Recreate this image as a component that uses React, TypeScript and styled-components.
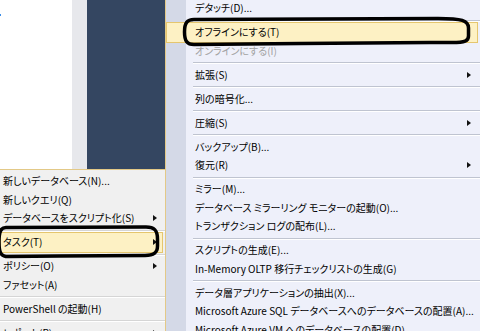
import styled, { createGlobalStyle } from 'styled-components';

type Entry =
  | { kind: 'item'; label: string; arrow?: boolean; disabled?: boolean; active?: boolean }
  | { kind: 'sep' };

const taskMenu: Entry[] = [
  { kind: 'item', label: 'デタッチ(D)...' },
  { kind: 'sep' },
  { kind: 'item', label: 'オフラインにする(T)', active: true },
  { kind: 'item', label: 'オンラインにする(I)', disabled: true },
  { kind: 'sep' },
  { kind: 'item', label: '拡張(S)', arrow: true },
  { kind: 'sep' },
  { kind: 'item', label: '列の暗号化...' },
  { kind: 'sep' },
  { kind: 'item', label: '圧縮(S)', arrow: true },
  { kind: 'sep' },
  { kind: 'item', label: 'バックアップ(B)...' },
  { kind: 'item', label: '復元(R)', arrow: true },
  { kind: 'sep' },
  { kind: 'item', label: 'ミラー(M)...' },
  { kind: 'item', label: 'データベース ミラーリング モニターの起動(O)...' },
  { kind: 'item', label: 'トランザクション ログの配布(L)...' },
  { kind: 'sep' },
  { kind: 'item', label: 'スクリプトの生成(E)...' },
  { kind: 'item', label: 'In-Memory OLTP 移行チェックリストの生成(G)' },
  { kind: 'sep' },
  { kind: 'item', label: 'データ層アプリケーションの抽出(X)...' },
  { kind: 'item', label: 'Microsoft Azure SQL データベースへのデータベースの配置(A)...' },
  { kind: 'item', label: 'Microsoft Azure VM へのデータベースの配置(D)...' },
];

const dbMenu: Entry[] = [
  { kind: 'item', label: '新しいデータベース(N)...' },
  { kind: 'item', label: '新しいクエリ(Q)' },
  { kind: 'item', label: 'データベースをスクリプト化(S)', arrow: true },
  { kind: 'sep' },
  { kind: 'item', label: 'タスク(T)', arrow: true, active: true },
  { kind: 'sep' },
  { kind: 'item', label: 'ポリシー(O)', arrow: true },
  { kind: 'item', label: 'ファセット(A)' },
  { kind: 'sep' },
  { kind: 'item', label: 'PowerShell の起動(H)' },
  { kind: 'sep' },
  { kind: 'item', label: 'レポート(P)', arrow: true },
];

const GlobalStyle = createGlobalStyle`
  html, body {
    margin: 0;
    padding: 0;
    width: 480px;
    height: 331px;
    overflow: hidden;
    background: #fff;
  }
  body {
    font-family: "Noto Sans CJK JP", "Noto Sans", sans-serif;
    font-feature-settings: "palt";
  }
`;

const Screen = styled.div`
  display: grid;
  grid-template-columns: 165px 315px;
  width: 480px;
  height: 331px;
  overflow: hidden;
`;

const LeftColumn = styled.div`
  display: flex;
  flex-direction: column;
  min-width: 0;
`;

const Backdrop = styled.div`
  display: flex;
  height: 169px;
  flex-shrink: 0;
`;

const Pane = styled.div<{ $tone: 'white' | 'gray' | 'navy'; $w?: number }>`
  width: ${p => (p.$w ? `${p.$w}px` : 'auto')};
  flex: ${p => (p.$w ? 'none' : '1')};
  background: ${p => (p.$tone === 'white' ? '#ffffff' : p.$tone === 'gray' ? '#e7e8ec' : '#344661')};
  position: relative;
`;

const Caret = styled.div`
  position: absolute;
  left: 0;
  top: 14px;
  width: 1px;
  height: 2px;
  background: #3c8ee8;
`;

const DbMenu = styled.div`
  flex: 1;
  border-top: 1px solid #e3c987;
  background: #f0f0f0;
  padding-top: 1.75px;
`;

const TaskMenu = styled.div`
  height: 100%;
  box-sizing: border-box;
  border-left: 1px solid #e3c987;
  background: linear-gradient(to right, #d4d9e7 0 20px, #eef0fa 20px);
`;

const TaskList = styled.div`
  margin-top: -1.25px;
`;

const Row = styled.div<{ $active?: boolean; $disabled?: boolean; $pad: number; $arrowPad: number }>`
  position: relative;
  display: flex;
  align-items: center;
  height: 18.5px;
  box-sizing: border-box;
  padding-left: ${p => p.$pad}px;
  padding-right: ${p => p.$arrowPad}px;
  margin-right: 2px;
  font-size: 10px;
  line-height: 1;
  white-space: nowrap;
  color: ${p => (p.$disabled ? '#a2a2a2' : '#000')};
  ${p =>
    p.$active &&
    `
    background: #fdf1c4;
    box-shadow: inset 0 0 0 1px #e5c66e;
    height: 21px;
    margin-top: -1.25px;
    margin-bottom: -1.25px;
  `}
`;

const Label = styled.span`
  flex: 1;
  min-width: 0;
`;

const Arrow = styled.span`
  flex: none;
  width: 0;
  height: 0;
  border-top: 3.5px solid transparent;
  border-bottom: 3.5px solid transparent;
  border-left: 4px solid #111;
`;

const Separator = styled.div<{ $inset: number; $line: string }>`
  height: 5.5px;
  display: flex;
  align-items: center;
  padding-left: ${p => p.$inset}px;
  &::after {
    content: '';
    flex: 1;
    height: 1px;
    background: ${p => p.$line};
    box-shadow: 0 1px 0 #ffffff;
  }
`;

const Scribble = styled.svg<{ $x: number; $y: number }>`
  position: absolute;
  left: ${p => p.$x}px;
  top: ${p => p.$y}px;
  overflow: visible;
  pointer-events: none;
`;

const RightMark = () => (
  <Scribble $x={15} $y={-5.75} width={292} height={32} viewBox="181 17 292 32">
    <path
      d="M194 20.5 L438 19.5 C462 19.5 468.5 21.5 468.5 29 L468.5 37 C468.5 42 465 43.5 452 43.5 L430 43.5 L300 44.5 L194 45.5 C187 45.5 184.5 42 184.5 33 C184.5 24 187 20.5 194 20.5 Z"
      fill="none"
      stroke="#000"
      strokeWidth={3.5}
      strokeLinejoin="round"
    />
  </Scribble>
);

const LeftMark = () => (
  <Scribble $x={-4} $y={-8.75} width={166} height={38} viewBox="-4 224 166 38">
    <path
      d="M6 228.5 L146 228 C154 228 157.5 231 157.5 240 L157.5 247 C157.5 254.5 153 256.5 145 256.5 L60 257 L8 257.5 C1 257.5 -1 254 -1 243 C-1 232 1 228.5 6 228.5 Z"
      fill="none"
      stroke="#000"
      strokeWidth={3.5}
      strokeLinejoin="round"
    />
  </Scribble>
);

const MenuEntries = ({
  entries,
  pad,
  sepInset,
  arrowPad,
  line,
  mark,
}: {
  entries: Entry[];
  pad: number;
  sepInset: number;
  arrowPad: number;
  line: string;
  mark: React.ReactNode;
}) => (
  <>
    {entries.map((e, i) =>
      e.kind === 'sep' ? (
        <Separator key={i} $inset={sepInset} $line={line} />
      ) : (
        <Row key={i} $active={e.active} $disabled={e.disabled} $pad={pad} $arrowPad={arrowPad}>
          <Label>{e.label}</Label>
          {e.arrow && <Arrow />}
          {e.active && mark}
        </Row>
      )
    )}
  </>
);

export default function App() {
  return (
    <>
      <GlobalStyle />
      <Screen>
        <LeftColumn>
          <Backdrop>
            <Pane $tone="white" $w={72}>
              <Caret />
            </Pane>
            <Pane $tone="gray" $w={15} />
            <Pane $tone="navy" />
          </Backdrop>
          <DbMenu>
            <MenuEntries entries={dbMenu} pad={3} sepInset={0} arrowPad={6} line="#d5d5d5" mark={<LeftMark />} />
          </DbMenu>
        </LeftColumn>
        <TaskMenu>
          <TaskList>
            <MenuEntries entries={taskMenu} pad={29} sepInset={27} arrowPad={7} line="#bfc4d0" mark={<RightMark />} />
          </TaskList>
        </TaskMenu>
      </Screen>
    </>
  );
}
